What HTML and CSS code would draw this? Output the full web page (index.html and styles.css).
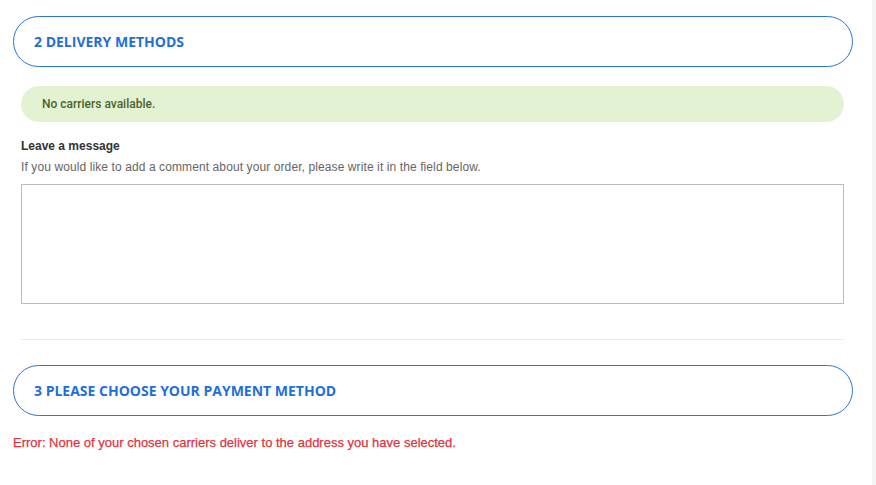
FILE: index.html
```html
<!DOCTYPE html>
<html>
<head>
<meta charset="utf-8">
<link rel="stylesheet" href="styles.css">
</head>
<body>
<div class="page">
  <div class="step-head">2 Delivery methods</div>
  <div class="content">
    <div class="alert">No carriers available.</div>
    <div class="msg-label">Leave a message</div>
    <div class="msg-hint">If you would like to add a comment about your order, please write it in the field below.</div>
    <textarea class="msg-box"></textarea>
    <div class="divider"></div>
  </div>
  <div class="step-head">3 Please choose your payment method</div>
  <div class="error">Error: None of your chosen carriers deliver to the address you have selected.</div>
</div>
<div class="strip"></div>
</body>
</html>
```
FILE: styles.css
```css
html, body { margin: 0; padding: 0; height: 100%; }
body {
  display: flex;
  background: #fff;
  font-family: "Liberation Sans", Arial, sans-serif;
}
.page {
  width: 872px;
  padding-top: 16px;
  box-sizing: border-box;
  background: #fff;
}
.strip {
  flex: 1;
  background: #f3f3f3;
}
.step-head {
  margin: 0 19px 0 13px;
  height: 51px;
  box-sizing: border-box;
  border: 1px solid #2f74d0;
  border-radius: 26px;
  padding-left: 20px;
  display: flex;
  align-items: center;
  font-family: "Open Sans", sans-serif;
  font-weight: 700;
  font-size: 14px;
  text-transform: uppercase;
  color: #1f6fd6;
}
.content {
  margin: 19px 28px 0 21px;
}
.alert {
  height: 36px;
  background: #e4f2d4;
  border-radius: 18px;
  padding-left: 21px;
  display: flex;
  align-items: center;
  font-family: Roboto, sans-serif;
  font-weight: 500;
  font-size: 12px;
  color: #4a6428;
}
.msg-label {
  margin-top: 17px;
  font-weight: 700;
  font-size: 12px;
  line-height: 14px;
  color: #333;
}
.msg-hint {
  margin-top: 7px;
  font-size: 12px;
  line-height: 14px;
  letter-spacing: 0.1px;
  color: #666;
}
.msg-box {
  display: block;
  margin-top: 10px;
  width: 100%;
  height: 120px;
  box-sizing: border-box;
  border: 1px solid #bbb;
  resize: none;
  padding: 0;
}
.divider {
  margin-top: 35px;
  height: 1px;
  background: #ececec;
  margin-bottom: 25px;
}
.error {
  margin: 19px 0 0 13px;
  font-size: 13px;
  line-height: 15px;
  color: #e0343d;
  -webkit-text-stroke: 0.25px #e0343d;
}
```
